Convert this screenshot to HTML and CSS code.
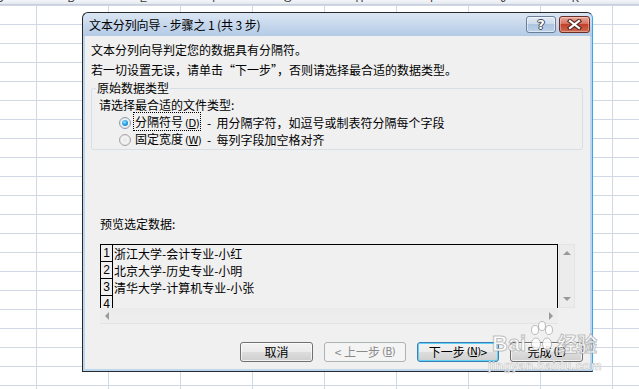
FILE: index.html
```html
<!DOCTYPE html>
<html lang="zh-CN">
<head>
<meta charset="utf-8">
<title>文本分列向导</title>
<link rel="stylesheet" href="styles.css">
</head>
<body>
<div class="sheet">
  <div class="colhead">
    <span>C</span><span>D</span><span>E</span><span>F</span><span>G</span><span>H</span><span>I</span><span>J</span><span>K</span><span>L</span>
  </div>
</div>

<div class="dialog">
  <div class="titlebar">
    <span class="title">文本分列向导 - 步骤之 1 (共 3 步)</span>
    <div class="tbtns">
      <span class="tbtn help"><span class="q">?</span></span>
      <span class="tbtn close">
        <svg width="15" height="11" viewBox="0 0 15 11"><path d="M3 2 L12 9 M12 2 L3 9" stroke="#5a2a24" stroke-width="4.4" stroke-linecap="square" fill="none"/><path d="M3 2 L12 9 M12 2 L3 9" stroke="#ffffff" stroke-width="2.2" stroke-linecap="square" fill="none"/></svg>
      </span>
    </div>
  </div>
  <div class="body">
    <div class="intro">
      <p>文本分列向导判定您的数据具有分隔符。</p>
      <p>若一切设置无误，请单击“下一步”，否则请选择最合适的数据类型。</p>
    </div>
    <fieldset class="group">
      <legend>原始数据类型</legend>
      <div class="prompt">请选择最合适的文件类型:</div>
      <div class="opts">
        <span class="radio on"></span><span class="lbl"><span class="focus">分隔符号<span class="acc">(<u>D</u>)</span></span></span><span class="desc">-&nbsp; 用分隔字符，如逗号或制表符分隔每个字段</span>
        <span class="radio"></span><span class="lbl">固定宽度<span class="acc">(<u>W</u>)</span></span><span class="desc">-&nbsp; 每列字段加空格对齐</span>
      </div>
    </fieldset>
    <div class="plabel">预览选定数据:</div>
    <div class="preview">
      <div class="pmain">
        <div class="grid">
          <div class="row"><span class="num">1</span><span class="cell">浙江大学-会计专业-小红</span></div>
          <div class="row"><span class="num">2</span><span class="cell">北京大学-历史专业-小明</span></div>
          <div class="row"><span class="num">3</span><span class="cell">清华大学-计算机专业-小张</span></div>
          <div class="row"><span class="num">4</span><span class="cell"></span></div>
        </div>
        <div class="hscroll"><span class="arr left"></span><span class="arr right"></span></div>
      </div>
      <div class="vscroll"><span class="arr up"></span><span class="arr down"></span></div>
    </div>
    <div class="buttons">
      <span class="btn narrow">取消</span>
      <span class="btn wide disabled">&lt; 上一步<span class="acc">(<u>B</u>)</span></span>
      <span class="btn wide focused">下一步<span class="acc">(<u>N</u>)</span> &gt;</span>
      <span class="btn narrow">完成<span class="acc">(<u>F</u>)</span></span>
    </div>
  </div>
</div>

<div class="watermark">
  <div class="wm-top">
    <span class="wm-bai">Bai</span>
    <svg class="paw" width="30" height="30" viewBox="0 0 30 30">
      <g fill="rgba(255,255,255,0.85)" stroke="rgba(140,140,140,0.55)" stroke-width="1">
        <ellipse cx="8" cy="9" rx="3.5" ry="4.5"/>
        <ellipse cx="15" cy="5" rx="3.5" ry="4.5"/>
        <ellipse cx="22" cy="9" rx="3.5" ry="4.5"/>
        <ellipse cx="9" cy="23" rx="4.5" ry="6"/>
        <ellipse cx="20" cy="23" rx="4.5" ry="6"/>
      </g>
    </svg>
    <span class="wm-jy">经验</span>
  </div>
  <div class="wm-url">jingyan.baidu.com</div>
</div>
</body>
</html>
```
FILE: styles.css
```css
* { box-sizing: border-box; }

html, body {
  margin: 0;
  padding: 0;
}

body {
  width: 639px;
  height: 389px;
  overflow: hidden;
  position: relative;
  font-family: "Noto Sans CJK SC", "Liberation Sans", sans-serif;
  font-size: 12px;
  color: #000;
  background-color: #ffffff;
  background-image:
    linear-gradient(to right, #d0d7e5 1px, transparent 1px),
    linear-gradient(to bottom, #d0d7e5 1px, transparent 1px);
  background-size: 72px 100%, 100% 19px;
  background-position: 36px 0, 0 5px;
}

/* spreadsheet column header strip */
.sheet {
  height: 5px;
  overflow: hidden;
}
.colhead {
  display: flex;
  margin-left: -36px;
  height: 5px;
  background: linear-gradient(#f3f5f8, #e4e9f0);
  border-bottom: 1px solid #c6cfdb;
}
.colhead span {
  flex: 0 0 72px;
  height: 5px;
  border-right: 1px solid #c6cfdb;
  text-align: center;
  font-family: "Liberation Sans", sans-serif;
  font-size: 11px;
  line-height: 14px;
  margin-top: 0;
  color: #3b3b3b;
  position: relative;
  top: -9px;
}

/* dialog window */
.dialog {
  position: absolute;
  left: 82px;
  top: 12px;
  width: 511px;
  height: 360px;
  border: 1px solid #262a30;
  border-right-color: #3aa6e8;
  border-radius: 6px 6px 0 0;
  background: linear-gradient(#dbe6f3 0, #c6d7ec 12px, #b3cae6 23px, #bcd6ee 24px, #bcd6ee 100%);
  display: flex;
  flex-direction: column;
}

.titlebar {
  height: 23px;
  display: flex;
  justify-content: space-between;
  align-items: flex-start;
  flex: 0 0 23px;
}
.title {
  padding-left: 6px;
  line-height: 23px;
  font-size: 12px;
  color: #000;
  letter-spacing: -0.1px;
}
.tbtns {
  display: flex;
  gap: 3px;
  margin-top: 3px;
  margin-right: 2px;
}
.tbtn {
  height: 17px;
  border-radius: 3px;
  display: flex;
  align-items: center;
  justify-content: center;
}
.help {
  width: 30px;
  border: 1px solid #6a7d99;
  background: linear-gradient(#e3ebf5 0, #cddbec 45%, #aec4df 50%, #bcd2ea 100%);
  box-shadow: inset 0 0 0 1px rgba(255,255,255,0.5);
}
.q {
  font-family: "DejaVu Sans", sans-serif;
  font-weight: bold;
  font-size: 13px;
  line-height: 13px;
  color: #fff;
  text-shadow: 1px 0 0 #3a4656, -1px 0 0 #3a4656, 0 1px 0 #3a4656, 0 -1px 0 #3a4656;
}
.close {
  width: 31px;
  border: 1px solid #6b2c25;
  background: linear-gradient(#e9a99b 0, #d7735f 45%, #c2412c 50%, #cf6a4f 100%);
  box-shadow: inset 0 0 0 1px rgba(255,255,255,0.35);
}

.body {
  flex: 1;
  margin: 0 2px 2px 2px;
  background: #f0f0f0;
  display: flex;
  flex-direction: column;
}

.intro {
  padding: 4px 6px 0 6px;
}
.intro p {
  margin: 0;
  line-height: 20px;
  white-space: nowrap;
}

.group {
  margin: 1px 7px 0 6px;
  padding: 1px 0 1px 7px;
  border: 1px solid #d5dfe5;
  border-radius: 3px;
  min-width: 0;
}
.group legend {
  padding: 0 1px;
  margin-left: -3px;
  line-height: 14px;
  font-size: 12px;
}
.prompt {
  line-height: 18px;
}
.opts {
  display: grid;
  grid-template-columns: 12px 68px auto;
  grid-auto-rows: 17px;
  column-gap: 4px;
  align-items: center;
  padding-left: 20px;
}
.radio {
  width: 12px;
  height: 12px;
  border-radius: 50%;
  border: 1px solid #a4a4a4;
  background: radial-gradient(circle at 50% 50%, #e6e6e6 0, #f7f7f7 60%, #ffffff 100%);
  box-shadow: inset 0 0 0 1px #e2e2e2;
  position: relative;
}
.radio.on {
  border-color: #8c9cb1;
}
.radio.on::after {
  content: "";
  position: absolute;
  left: 2px;
  top: 2px;
  width: 6px;
  height: 6px;
  border-radius: 50%;
  background: radial-gradient(circle at 40% 35%, #8fe3ff 0, #28a0e6 50%, #0d5ea8 100%);
}
.lbl {
  line-height: 17px;
  white-space: nowrap;
}
.focus {
  outline: 1px dotted #000;
  outline-offset: 0;
  padding: 0 1px 0 1px;
  margin-left: -1px;
}
.acc {
  font-size: 10px;
  font-family: "DejaVu Sans", sans-serif;
  margin-left: 2px;
  letter-spacing: -0.5px;
}
.desc {
  line-height: 17px;
  white-space: nowrap;
}

.plabel {
  margin: 65px 0 0 15px;
  line-height: 18px;
}

.preview {
  display: flex;
  margin: 11px 0 0 15px;
  height: 80px;
}
.pmain {
  width: 458px;
  display: flex;
  flex-direction: column;
}
.grid {
  height: 64px;
  border: 1px solid #000;
  border-bottom: none;
  overflow: hidden;
}
.row {
  display: flex;
  height: 17px;
  line-height: 17px;
}
.num {
  width: 12px;
  flex: 0 0 12px;
  border-right: 1px solid #000;
  border-bottom: 1px solid #000;
  text-align: center;
  font-family: "Liberation Sans", sans-serif;
  font-size: 12px;
  line-height: 17px;
}
.cell {
  padding-left: 1px;
  white-space: nowrap;
}
.hscroll {
  height: 16px;
  background: linear-gradient(#ebebeb, #eeeeee);
  border-bottom: 1px solid #e4e4e4;
  position: relative;
}
.vscroll {
  width: 16px;
  height: 64px;
  margin-left: 1px;
  background: #ececec;
  border: 1px solid #e4e4e4;
  position: relative;
}
.arr {
  position: absolute;
  width: 0;
  height: 0;
  border: 4px solid transparent;
}
.arr.left { left: 5px; top: 4px; border-right-color: #9a9a9a; border-left-width: 0; }
.arr.right { right: 5px; top: 4px; border-left-color: #9a9a9a; border-right-width: 0; }
.arr.up { left: 3px; top: 6px; border-bottom-color: #9a9a9a; border-top-width: 0; }
.arr.down { left: 3px; bottom: 6px; border-top-color: #9a9a9a; border-bottom-width: 0; }

.buttons {
  display: flex;
  justify-content: flex-end;
  gap: 11px;
  margin: 18px 7px 0 0;
}
.btn {
  height: 20px;
  border: 1px solid #707070;
  border-radius: 3px;
  background: linear-gradient(#f2f2f2 0, #ebebeb 50%, #dddddd 51%, #cfcfcf 100%);
  box-shadow: inset 0 0 0 1px rgba(255,255,255,0.7);
  display: flex;
  align-items: center;
  justify-content: center;
  line-height: 18px;
  white-space: nowrap;
}
.btn.narrow { width: 73px; }
.btn.wide { width: 82px; }
.btn.disabled {
  border-color: #adb2b5;
  background: #f4f4f4;
  color: #8a8a8a;
  box-shadow: none;
}
.btn.focused {
  border-color: #3c7fb1;
  box-shadow: inset 0 0 0 1px #5fd0f6;
}

/* jingyan watermark, overlaid on the screenshot */
.watermark {
  position: absolute;
  left: 488px;
  top: 321px;
  width: 120px;
  color: rgba(255,255,255,0.88);
  pointer-events: none;
}
.wm-top {
  display: flex;
  align-items: flex-end;
  height: 34px;
}
.wm-bai {
  font-family: "Liberation Sans", sans-serif;
  font-weight: bold;
  font-size: 22px;
  line-height: 22px;
  -webkit-text-stroke: 1px rgba(140,140,140,0.55);
  margin-left: 4px;
}
.paw {
  margin-left: 1px;
  margin-bottom: 4px;
}
.wm-jy {
  font-size: 20px;
  line-height: 22px;
  font-weight: bold;
  -webkit-text-stroke: 1px rgba(140,140,140,0.55);
}
.wm-url {
  font-family: "Liberation Sans", sans-serif;
  font-weight: bold;
  font-size: 12px;
  line-height: 14px;
  margin-top: 4px;
  letter-spacing: 0.5px;
  -webkit-text-stroke: 0.6px rgba(140,140,140,0.5);
}
```
